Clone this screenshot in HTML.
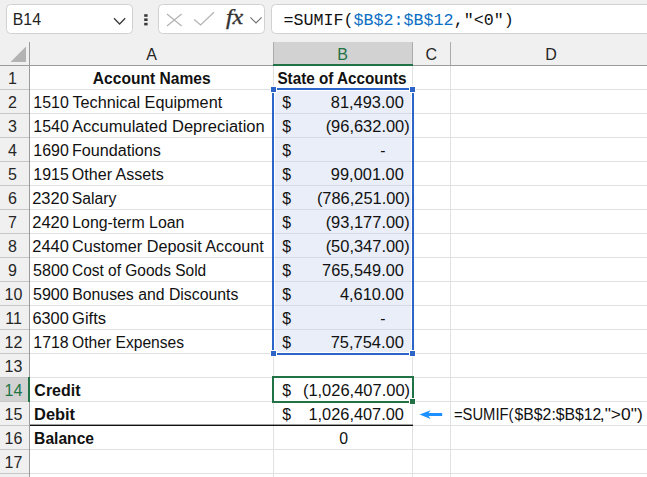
<!DOCTYPE html><html><head><meta charset="utf-8"><title>Sheet</title><style>html,body{margin:0;padding:0;background:#fff}svg{display:block}text{white-space:pre}.s{font-family:"Liberation Sans",sans-serif}.m{font-family:"Liberation Mono",monospace}.f{font-family:"Liberation Serif",serif}</style></head><body>
<svg width="647" height="477" viewBox="0 0 647 477">
<rect width="647" height="477" fill="#fff"/>
<rect x="0" y="0" width="647" height="66" fill="#f0f0f0"/>
<rect x="0" y="66" width="29" height="411" fill="#f0f0f0"/>
<rect x="6.5" y="4.5" width="126" height="29" rx="4" fill="#fff" stroke="#d1d1d1"/>
<path d="M114 18.2 L119.6 24 L125.2 18.2" fill="none" stroke="#3b3b3b" stroke-width="1.3"/>
<rect x="144.2" y="14.2" width="3.4" height="2.6" fill="#3a3a3a"/>
<rect x="144.2" y="18.4" width="3.4" height="2.6" fill="#3a3a3a"/>
<rect x="144.2" y="22.8" width="3.4" height="2.6" fill="#3a3a3a"/>
<rect x="158.5" y="4.5" width="106" height="29" rx="4" fill="#fff" stroke="#d1d1d1"/>
<path d="M167 14 L181.6 26 M181.6 14 L167 26" fill="none" stroke="#b4b4b4" stroke-width="1.3"/>
<path d="M194.2 19.6 L200.6 25 L214 12.2" fill="none" stroke="#b4b4b4" stroke-width="1.3"/>
<path d="M250.4 17.3 L256 23 L261.6 17.3" fill="none" stroke="#707070" stroke-width="1.1"/>
<rect x="271.5" y="4.5" width="400" height="29" rx="4" fill="#fff" stroke="#d1d1d1"/>
<path d="M26 46.5 L26 62 L10.5 62 Z" fill="#b3b3b3"/>
<rect x="274" y="42" width="138" height="22" fill="#d2d2d2"/>
<rect x="0" y="378" width="28" height="23" fill="#d2d2d2"/>
<rect x="30" y="89" width="617" height="1" fill="#e1e1e1"/>
<rect x="0" y="89" width="29" height="1" fill="#c6c6c6"/>
<rect x="30" y="113" width="617" height="1" fill="#e1e1e1"/>
<rect x="0" y="113" width="29" height="1" fill="#c6c6c6"/>
<rect x="30" y="137" width="617" height="1" fill="#e1e1e1"/>
<rect x="0" y="137" width="29" height="1" fill="#c6c6c6"/>
<rect x="30" y="161" width="617" height="1" fill="#e1e1e1"/>
<rect x="0" y="161" width="29" height="1" fill="#c6c6c6"/>
<rect x="30" y="185" width="617" height="1" fill="#e1e1e1"/>
<rect x="0" y="185" width="29" height="1" fill="#c6c6c6"/>
<rect x="30" y="209" width="617" height="1" fill="#e1e1e1"/>
<rect x="0" y="209" width="29" height="1" fill="#c6c6c6"/>
<rect x="30" y="233" width="617" height="1" fill="#e1e1e1"/>
<rect x="0" y="233" width="29" height="1" fill="#c6c6c6"/>
<rect x="30" y="257" width="617" height="1" fill="#e1e1e1"/>
<rect x="0" y="257" width="29" height="1" fill="#c6c6c6"/>
<rect x="30" y="281" width="617" height="1" fill="#e1e1e1"/>
<rect x="0" y="281" width="29" height="1" fill="#c6c6c6"/>
<rect x="30" y="305" width="617" height="1" fill="#e1e1e1"/>
<rect x="0" y="305" width="29" height="1" fill="#c6c6c6"/>
<rect x="30" y="329" width="617" height="1" fill="#e1e1e1"/>
<rect x="0" y="329" width="29" height="1" fill="#c6c6c6"/>
<rect x="30" y="353" width="617" height="1" fill="#e1e1e1"/>
<rect x="0" y="353" width="29" height="1" fill="#c6c6c6"/>
<rect x="30" y="377" width="617" height="1" fill="#e1e1e1"/>
<rect x="0" y="377" width="29" height="1" fill="#c6c6c6"/>
<rect x="30" y="401" width="617" height="1" fill="#e1e1e1"/>
<rect x="0" y="401" width="29" height="1" fill="#c6c6c6"/>
<rect x="30" y="425" width="617" height="1" fill="#e1e1e1"/>
<rect x="0" y="425" width="29" height="1" fill="#c6c6c6"/>
<rect x="30" y="449" width="617" height="1" fill="#e1e1e1"/>
<rect x="0" y="449" width="29" height="1" fill="#c6c6c6"/>
<rect x="30" y="473" width="617" height="1" fill="#e1e1e1"/>
<rect x="0" y="473" width="29" height="1" fill="#c6c6c6"/>
<rect x="273" y="66" width="1" height="411" fill="#e1e1e1"/>
<rect x="273" y="42" width="1" height="23" fill="#ababab"/>
<rect x="412" y="66" width="1" height="411" fill="#e1e1e1"/>
<rect x="412" y="42" width="1" height="23" fill="#ababab"/>
<rect x="450" y="66" width="1" height="411" fill="#e1e1e1"/>
<rect x="450" y="42" width="1" height="23" fill="#ababab"/>
<rect x="0" y="65" width="647" height="1" fill="#9b9b9b"/>
<rect x="29" y="42" width="1" height="435" fill="#9b9b9b"/>
<rect x="273" y="64" width="140" height="2" fill="#217346"/>
<rect x="28" y="377" width="2" height="25" fill="#217346"/>
<rect x="275" y="91" width="136" height="261" fill="#e9eef8"/>
<rect x="275" y="113" width="136" height="1" fill="#d5dae3"/>
<rect x="275" y="137" width="136" height="1" fill="#d5dae3"/>
<rect x="275" y="161" width="136" height="1" fill="#d5dae3"/>
<rect x="275" y="185" width="136" height="1" fill="#d5dae3"/>
<rect x="275" y="209" width="136" height="1" fill="#d5dae3"/>
<rect x="275" y="233" width="136" height="1" fill="#d5dae3"/>
<rect x="275" y="257" width="136" height="1" fill="#d5dae3"/>
<rect x="275" y="281" width="136" height="1" fill="#d5dae3"/>
<rect x="275" y="305" width="136" height="1" fill="#d5dae3"/>
<rect x="275" y="329" width="136" height="1" fill="#d5dae3"/>
<rect x="277" y="88" width="132" height="2" fill="#2d64c8"/>
<rect x="277" y="353" width="132" height="2" fill="#2d64c8"/>
<rect x="272" y="93" width="2" height="257" fill="#2d64c8"/>
<rect x="412" y="93" width="2" height="257" fill="#2d64c8"/>
<rect x="270" y="86" width="7" height="7" fill="#fff"/>
<rect x="271" y="87" width="5" height="5" fill="#2d64c8"/>
<rect x="409" y="86" width="7" height="7" fill="#fff"/>
<rect x="410" y="87" width="5" height="5" fill="#2d64c8"/>
<rect x="270" y="350" width="7" height="7" fill="#fff"/>
<rect x="271" y="351" width="5" height="5" fill="#2d64c8"/>
<rect x="409" y="350" width="7" height="7" fill="#fff"/>
<rect x="410" y="351" width="5" height="5" fill="#2d64c8"/>
<rect x="30" y="424.6" width="383" height="1.4" fill="#111"/>
<path d="M273 377 H413 V402 H273 Z" fill="none" stroke="#217346" stroke-width="2"/>
<rect x="409" y="398" width="7" height="7" fill="#fff"/>
<rect x="410" y="399" width="5" height="5" fill="#217346"/>
<path d="M419.6 414.5 L430.6 410.2 L428.6 413 L442.2 413 L442.2 416 L428.6 416 L430.6 418.9 Z" fill="#1e90ff"/>
<text id="a1" class="s" y="83.5" font-size="15.8" fill="#111" font-weight="bold" x="92.82" textLength="117.77" lengthAdjust="spacingAndGlyphs">Account Names</text>
<text id="a2" class="s" y="107.5" font-size="15.8" fill="#111" x="33.30" textLength="35.53" lengthAdjust="spacingAndGlyphs">1510</text>
<text id="l2" class="s" y="107.5" font-size="15.8" fill="#111" x="72.45" textLength="149.74" lengthAdjust="spacingAndGlyphs">Technical Equipment</text>
<text id="a3" class="s" y="131.5" font-size="15.8" fill="#111" x="33.30" textLength="35.53" lengthAdjust="spacingAndGlyphs">1540</text>
<text id="l3" class="s" y="131.5" font-size="15.8" fill="#111" x="72.02" textLength="192.67" lengthAdjust="spacingAndGlyphs">Accumulated Depreciation</text>
<text id="a4" class="s" y="155.5" font-size="15.8" fill="#111" x="33.31" textLength="35.50" lengthAdjust="spacingAndGlyphs">1690</text>
<text id="l4" class="s" y="155.5" font-size="15.8" fill="#111" x="71.94" textLength="88.87" lengthAdjust="spacingAndGlyphs">Foundations</text>
<text id="a5" class="s" y="179.5" font-size="15.8" fill="#111" x="33.30" textLength="35.48" lengthAdjust="spacingAndGlyphs">1915</text>
<text id="l5" class="s" y="179.5" font-size="15.8" fill="#111" x="71.81" textLength="91.98" lengthAdjust="spacingAndGlyphs">Other Assets</text>
<text id="a6" class="s" y="203.5" font-size="15.8" fill="#111" x="32.21" textLength="36.67" lengthAdjust="spacingAndGlyphs">2320</text>
<text id="l6" class="s" y="203.5" font-size="15.8" fill="#111" x="71.75" textLength="44.66" lengthAdjust="spacingAndGlyphs">Salary</text>
<text id="a7" class="s" y="227.5" font-size="15.8" fill="#111" x="32.21" textLength="36.80" lengthAdjust="spacingAndGlyphs">2420</text>
<text id="l7" class="s" y="227.5" font-size="15.8" fill="#111" x="72.22" textLength="112.21" lengthAdjust="spacingAndGlyphs">Long-term Loan</text>
<text id="a8" class="s" y="251.5" font-size="15.8" fill="#111" x="32.26" textLength="36.60" lengthAdjust="spacingAndGlyphs">2440</text>
<text id="l8" class="s" y="251.5" font-size="15.8" fill="#111" x="71.99" textLength="191.83" lengthAdjust="spacingAndGlyphs">Customer Deposit Account</text>
<text id="a9" class="s" y="275.5" font-size="15.8" fill="#111" x="32.98" textLength="35.83" lengthAdjust="spacingAndGlyphs">5800</text>
<text id="l9" class="s" y="275.5" font-size="15.8" fill="#111" x="71.96" textLength="134.27" lengthAdjust="spacingAndGlyphs">Cost of Goods Sold</text>
<text id="a10" class="s" y="299.5" font-size="15.8" fill="#111" x="32.94" textLength="35.83" lengthAdjust="spacingAndGlyphs">5900</text>
<text id="l10" class="s" y="299.5" font-size="15.8" fill="#111" x="72.23" textLength="166.14" lengthAdjust="spacingAndGlyphs">Bonuses and Discounts</text>
<text id="a11" class="s" y="323.5" font-size="15.8" fill="#111" x="32.43" textLength="36.32" lengthAdjust="spacingAndGlyphs">6300</text>
<text id="l11" class="s" y="323.5" font-size="15.8" fill="#111" x="72.04" textLength="34.00" lengthAdjust="spacingAndGlyphs">Gifts</text>
<text id="a12" class="s" y="347.5" font-size="15.8" fill="#111" x="33.29" textLength="35.46" lengthAdjust="spacingAndGlyphs">1718</text>
<text id="l12" class="s" y="347.5" font-size="15.8" fill="#111" x="72.10" textLength="112.01" lengthAdjust="spacingAndGlyphs">Other Expenses</text>
<text id="a14" class="s" y="395.5" font-size="15.8" fill="#111" font-weight="bold" x="34.38" textLength="46.08" lengthAdjust="spacingAndGlyphs">Credit</text>
<text id="a15" class="s" y="419.5" font-size="15.8" fill="#111" font-weight="bold" x="34.04" textLength="41.06" lengthAdjust="spacingAndGlyphs">Debit</text>
<text id="a16" class="s" y="443.5" font-size="15.8" fill="#111" font-weight="bold" x="34.12" textLength="59.95" lengthAdjust="spacingAndGlyphs">Balance</text>
<text id="b1" class="s" y="83.5" font-size="15.8" fill="#111" font-weight="bold" x="277.45" textLength="129.07" lengthAdjust="spacingAndGlyphs">State of Accounts</text>
<text id="b2" class="s" y="107.5" font-size="15.8" fill="#111" x="330.84" textLength="72.95" lengthAdjust="spacingAndGlyphs">81,493.00</text>
<text id="b3" class="s" y="131.5" font-size="15.8" fill="#111" x="325.65" textLength="84.10" lengthAdjust="spacingAndGlyphs">(96,632.00)</text>
<text id="b4" class="s" y="155.5" font-size="15.8" fill="#111" x="380.25">-</text>
<text id="b5" class="s" y="179.5" font-size="15.8" fill="#111" x="330.88" textLength="72.93" lengthAdjust="spacingAndGlyphs">99,001.00</text>
<text id="b6" class="s" y="203.5" font-size="15.8" fill="#111" x="316.91" textLength="93.01" lengthAdjust="spacingAndGlyphs">(786,251.00)</text>
<text id="b7" class="s" y="227.5" font-size="15.8" fill="#111" x="325.65" textLength="84.10" lengthAdjust="spacingAndGlyphs">(93,177.00)</text>
<text id="b8" class="s" y="251.5" font-size="15.8" fill="#111" x="325.65" textLength="84.10" lengthAdjust="spacingAndGlyphs">(50,347.00)</text>
<text id="b9" class="s" y="275.5" font-size="15.8" fill="#111" x="322.11" textLength="81.73" lengthAdjust="spacingAndGlyphs">765,549.00</text>
<text id="b10" class="s" y="299.5" font-size="15.8" fill="#111" x="339.95" textLength="63.84" lengthAdjust="spacingAndGlyphs">4,610.00</text>
<text id="b11" class="s" y="323.5" font-size="15.8" fill="#111" x="380.25">-</text>
<text id="b12" class="s" y="347.5" font-size="15.8" fill="#111" x="330.68" textLength="73.17" lengthAdjust="spacingAndGlyphs">75,754.00</text>
<text id="b14" class="s" y="395.5" font-size="15.8" fill="#111" x="302.90" textLength="107.20" lengthAdjust="spacingAndGlyphs">(1,026,407.00)</text>
<text id="b15" class="s" y="419.5" font-size="15.8" fill="#111" x="308.48" textLength="95.47" lengthAdjust="spacingAndGlyphs">1,026,407.00</text>
<text id="b16" class="s" y="443.5" font-size="15.8" fill="#111" x="339.22">0</text>
<text id="d2" class="s" y="107.5" font-size="15.8" fill="#111" x="282.25">$</text>
<text id="d3" class="s" y="131.5" font-size="15.8" fill="#111" x="282.25">$</text>
<text id="d4" class="s" y="155.5" font-size="15.8" fill="#111" x="282.25">$</text>
<text id="d5" class="s" y="179.5" font-size="15.8" fill="#111" x="282.25">$</text>
<text id="d6" class="s" y="203.5" font-size="15.8" fill="#111" x="282.25">$</text>
<text id="d7" class="s" y="227.5" font-size="15.8" fill="#111" x="282.25">$</text>
<text id="d8" class="s" y="251.5" font-size="15.8" fill="#111" x="282.25">$</text>
<text id="d9" class="s" y="275.5" font-size="15.8" fill="#111" x="282.25">$</text>
<text id="d10" class="s" y="299.5" font-size="15.8" fill="#111" x="282.25">$</text>
<text id="d11" class="s" y="323.5" font-size="15.8" fill="#111" x="282.25">$</text>
<text id="d12" class="s" y="347.5" font-size="15.8" fill="#111" x="282.25">$</text>
<text id="d14" class="s" y="395.5" font-size="15.8" fill="#111" x="282.25">$</text>
<text id="d15" class="s" y="419.5" font-size="15.8" fill="#111" x="282.25">$</text>
<text id="d15f" class="s" y="419.5" font-size="15.8" fill="#111" x="453.90" textLength="59.58" lengthAdjust="spacingAndGlyphs">=SUMIF(</text>
<text id="d15g" class="s" y="419.5" font-size="15.8" fill="#111" x="514.55" textLength="86.85" lengthAdjust="spacingAndGlyphs">$B$2:$B$12</text>
<text id="d15h" class="s" y="419.5" font-size="15.8" fill="#111" x="599.80" textLength="42.98" lengthAdjust="spacingAndGlyphs">,"&gt;0")</text>
<text id="hA" class="s" y="60" font-size="16" fill="#262626" x="146.28">A</text>
<text id="hB" class="s" y="60" font-size="16" fill="#217346" x="337.26">B</text>
<text id="hC" class="s" y="60" font-size="16" fill="#262626" x="425.61">C</text>
<text id="hD" class="s" y="60" font-size="16" fill="#262626" x="545.34">D</text>
<text id="r1" class="s" y="83.7" font-size="16" fill="#262626" x="12.4" text-anchor="middle">1</text>
<text id="r2" class="s" y="107.7" font-size="16" fill="#262626" x="12.4" text-anchor="middle">2</text>
<text id="r3" class="s" y="131.7" font-size="16" fill="#262626" x="12.4" text-anchor="middle">3</text>
<text id="r4" class="s" y="155.7" font-size="16" fill="#262626" x="12.4" text-anchor="middle">4</text>
<text id="r5" class="s" y="179.7" font-size="16" fill="#262626" x="12.4" text-anchor="middle">5</text>
<text id="r6" class="s" y="203.7" font-size="16" fill="#262626" x="12.4" text-anchor="middle">6</text>
<text id="r7" class="s" y="227.7" font-size="16" fill="#262626" x="12.4" text-anchor="middle">7</text>
<text id="r8" class="s" y="251.7" font-size="16" fill="#262626" x="12.4" text-anchor="middle">8</text>
<text id="r9" class="s" y="275.7" font-size="16" fill="#262626" x="12.4" text-anchor="middle">9</text>
<text id="r10" class="s" y="299.7" font-size="16" fill="#262626" x="13.5" text-anchor="middle">10</text>
<text id="r11" class="s" y="323.7" font-size="16" fill="#262626" x="13.5" text-anchor="middle">11</text>
<text id="r12" class="s" y="347.7" font-size="16" fill="#262626" x="13.5" text-anchor="middle">12</text>
<text id="r13" class="s" y="371.7" font-size="16" fill="#262626" x="13.5" text-anchor="middle">13</text>
<text id="r14" class="s" y="395.7" font-size="16" fill="#217346" x="13.5" text-anchor="middle">14</text>
<text id="r15" class="s" y="419.7" font-size="16" fill="#262626" x="13.5" text-anchor="middle">15</text>
<text id="r16" class="s" y="443.7" font-size="16" fill="#262626" x="13.5" text-anchor="middle">16</text>
<text id="r17" class="s" y="467.7" font-size="16" fill="#262626" x="13.5" text-anchor="middle">17</text>
<text id="nb" class="s" y="25.3" font-size="15.6" fill="#222" x="12.81" textLength="28.18" lengthAdjust="spacingAndGlyphs">B14</text>
<text id="f1" class="m" y="25.3" font-size="17.2" fill="#111" x="283.45" textLength="230.26" lengthAdjust="spacingAndGlyphs">=SUMIF(<tspan fill="#0b6fc4">$B$2:$B$12</tspan>,"&lt;0")</text>
<text id="fx" class="f" y="24.4" font-size="21" fill="#333" font-style="italic" stroke="#333" stroke-width="0.35" x="225.96" textLength="17.21" lengthAdjust="spacingAndGlyphs">fx</text>
</svg></body></html>
